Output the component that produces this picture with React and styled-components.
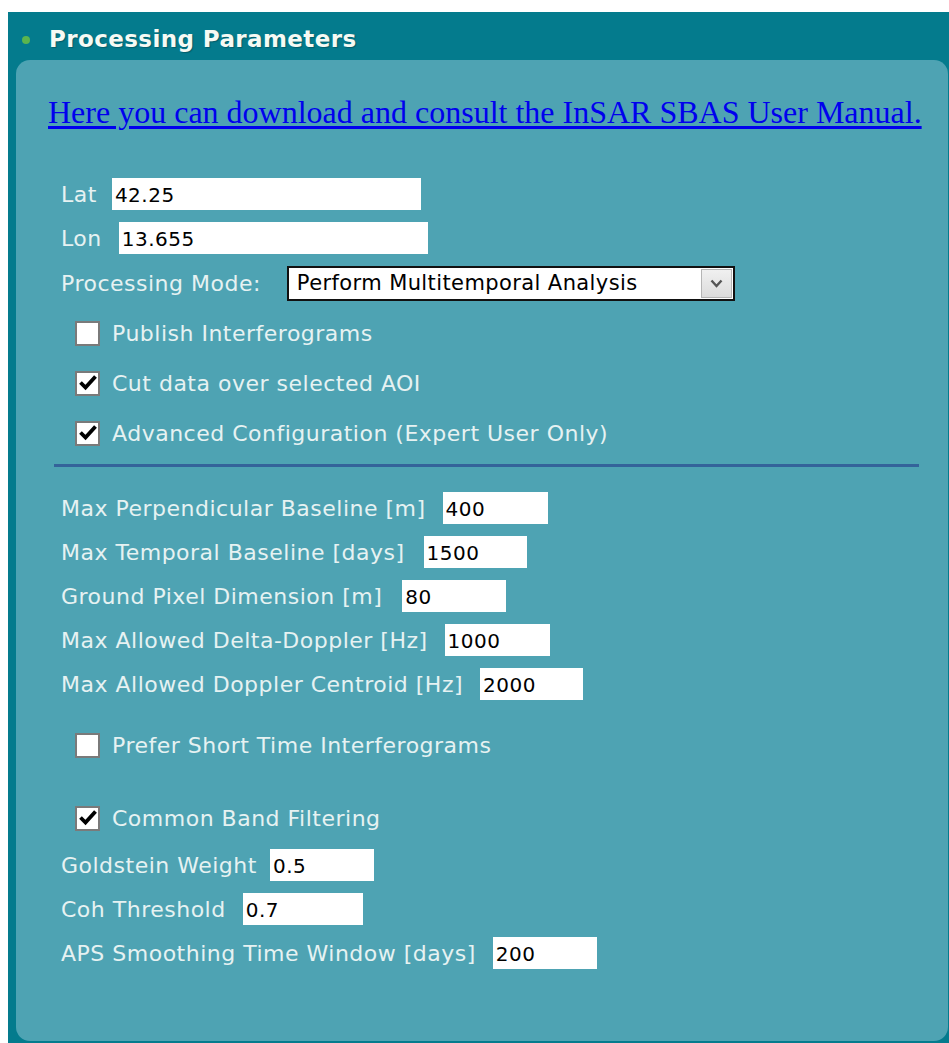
import React from 'react';
import styled, { createGlobalStyle } from 'styled-components';

const GlobalStyle = createGlobalStyle`
  html, body {
    margin: 0;
    padding: 0;
    background: #ffffff;
  }
  body {
    font-family: "DejaVu Sans", Verdana, sans-serif;
  }
`;

// Outer dark teal frame with the title bar
const Frame = styled.div`
  margin: 12px 0 0 8px;
  background: #047b8d;
  padding: 0 1px 4px 8px;
`;

const Header = styled.div`
  height: 48px;
  box-sizing: border-box;
  display: flex;
  align-items: center;
  padding: 5px 0 0 6px;
`;

const Dot = styled.span`
  width: 8px;
  height: 8px;
  border-radius: 50%;
  background: #5bb54e;
  margin-right: 19px;
  margin-top: 2px;
`;

const Title = styled.h2`
  margin: 0;
  font-family: "DejaVu Sans", Verdana, sans-serif;
  font-weight: bold;
  font-size: 23px;
  letter-spacing: 0.4px;
  line-height: 28px;
  color: #f6faf4;
  text-shadow: 1px 1px 1px rgba(0, 0, 0, 0.25);
`;

const Panel = styled.div`
  background: #4ea3b3;
  border-radius: 14px;
  padding: 32px 0 66px 0;
`;

const ManualLink = styled.a`
  display: block;
  margin-left: 32px;
  font-family: "Liberation Serif", "Times New Roman", serif;
  font-size: 32px;
  line-height: 40px;
  color: #0000ee;
  text-decoration: underline;
  text-underline-offset: 3px;
`;

const Form = styled.div`
  margin-top: 40px;
  padding-left: 45px;
  display: flex;
  flex-direction: column;
`;

const Row = styled.div`
  display: flex;
  align-items: center;
  height: ${p => p.h || 44}px;
  margin-top: ${p => p.mt || 0}px;
`;

const Label = styled.span`
  font-size: 22px;
  letter-spacing: 0.5px;
  color: #e6f2f2;
  white-space: nowrap;
`;

const TextBox = styled.input`
  box-sizing: border-box;
  width: ${p => p.w || 104}px;
  height: 32px;
  margin-left: ${p => p.ml || 17}px;
  border: none;
  outline: none;
  padding: 2px 0 0 3px;
  background: #ffffff;
  font-family: "DejaVu Sans", Verdana, sans-serif;
  font-size: 20px;
  letter-spacing: 0.5px;
  color: #000000;
`;

const Select = styled.div`
  box-sizing: border-box;
  width: 448px;
  height: 35px;
  margin-left: ${p => p.ml || 26}px;
  border: 2px solid #111111;
  background: #ffffff;
  display: flex;
  align-items: center;
  justify-content: space-between;
  padding: 0 1px 0 8px;
`;

const SelectText = styled.span`
  font-size: 21px;
  letter-spacing: 0.4px;
  color: #000000;
  white-space: nowrap;
`;

const SelectButton = styled.span`
  box-sizing: border-box;
  width: 31px;
  height: 29px;
  border: 1px solid #b5b5b5;
  background: linear-gradient(#f0f0f0, #dcdcdc);
  display: flex;
  align-items: center;
  justify-content: center;
`;

const Check = styled.span`
  box-sizing: border-box;
  width: 25px;
  height: 25px;
  margin-left: 14px;
  margin-right: 12px;
  border: 2px solid #7a7a7a;
  background: #ffffff;
  display: flex;
  align-items: center;
  justify-content: center;
  flex-shrink: 0;
`;

const Separator = styled.hr`
  margin: 6px 0 0 -7px;
  width: 865px;
  height: 3px;
  border: none;
  background: #34639a;
`;

const Tick = () => (
  <svg width="18" height="16" viewBox="0 0 18 16">
    <path d="M1.5 7.5 L6.5 12.5 L16.5 1.5" fill="none" stroke="#000" strokeWidth="3.8" />
  </svg>
);

const Chevron = () => (
  <svg width="13" height="9" viewBox="0 0 13 9">
    <path d="M1.5 1.5 L6.5 7 L11.5 1.5" fill="none" stroke="#555" strokeWidth="2.4" />
  </svg>
);

const CheckRow = ({ checked, label, mt }) => (
  <Row h={50} mt={mt}>
    <Check>{checked && <Tick />}</Check>
    <Label>{label}</Label>
  </Row>
);

const Field = ({ label, value, w, ml, mt }) => (
  <Row mt={mt}>
    <Label>{label}</Label>
    <TextBox w={w} ml={ml} defaultValue={value} />
  </Row>
);

export default function App() {
  return (
    <>
      <GlobalStyle />
      <Frame>
        <Header>
          <Dot />
          <Title>Processing Parameters</Title>
        </Header>
        <Panel>
          <ManualLink href="#">Here you can download and consult the InSAR SBAS User Manual.</ManualLink>
          <Form>
            <Field label="Lat" value="42.25" w={309} ml={15} />
            <Field label="Lon" value="13.655" w={309} ml={17} />
            <Row h={46}>
              <Label>Processing Mode:</Label>
              <Select>
                <SelectText>Perform Multitemporal Analysis</SelectText>
                <SelectButton><Chevron /></SelectButton>
              </Select>
            </Row>
            <CheckRow label="Publish Interferograms" mt={2} />
            <CheckRow checked label="Cut data over selected AOI" />
            <CheckRow checked label="Advanced Configuration (Expert User Only)" />
            <Separator />

            <Field label="Max Perpendicular Baseline [m]" value="400" w={105} mt={19} />
            <Field label="Max Temporal Baseline [days]" value="1500" w={103} ml={19} />
            <Field label="Ground Pixel Dimension [m]" value="80" w={104} ml={20} />
            <Field label="Max Allowed Delta-Doppler [Hz]" value="1000" w={105} />
            <Field label="Max Allowed Doppler Centroid [Hz]" value="2000" w={103} />

            <CheckRow label="Prefer Short Time Interferograms" mt={14} />
            <CheckRow checked label="Common Band Filtering" mt={23} />
            <Field label="Goldstein Weight" value="0.5" w={104} ml={13} />
            <Field label="Coh Threshold" value="0.7" w={120} />
            <Field label="APS Smoothing Time Window [days]" value="200" w={104} />
          </Form>
        </Panel>
      </Frame>
    </>
  );
}
